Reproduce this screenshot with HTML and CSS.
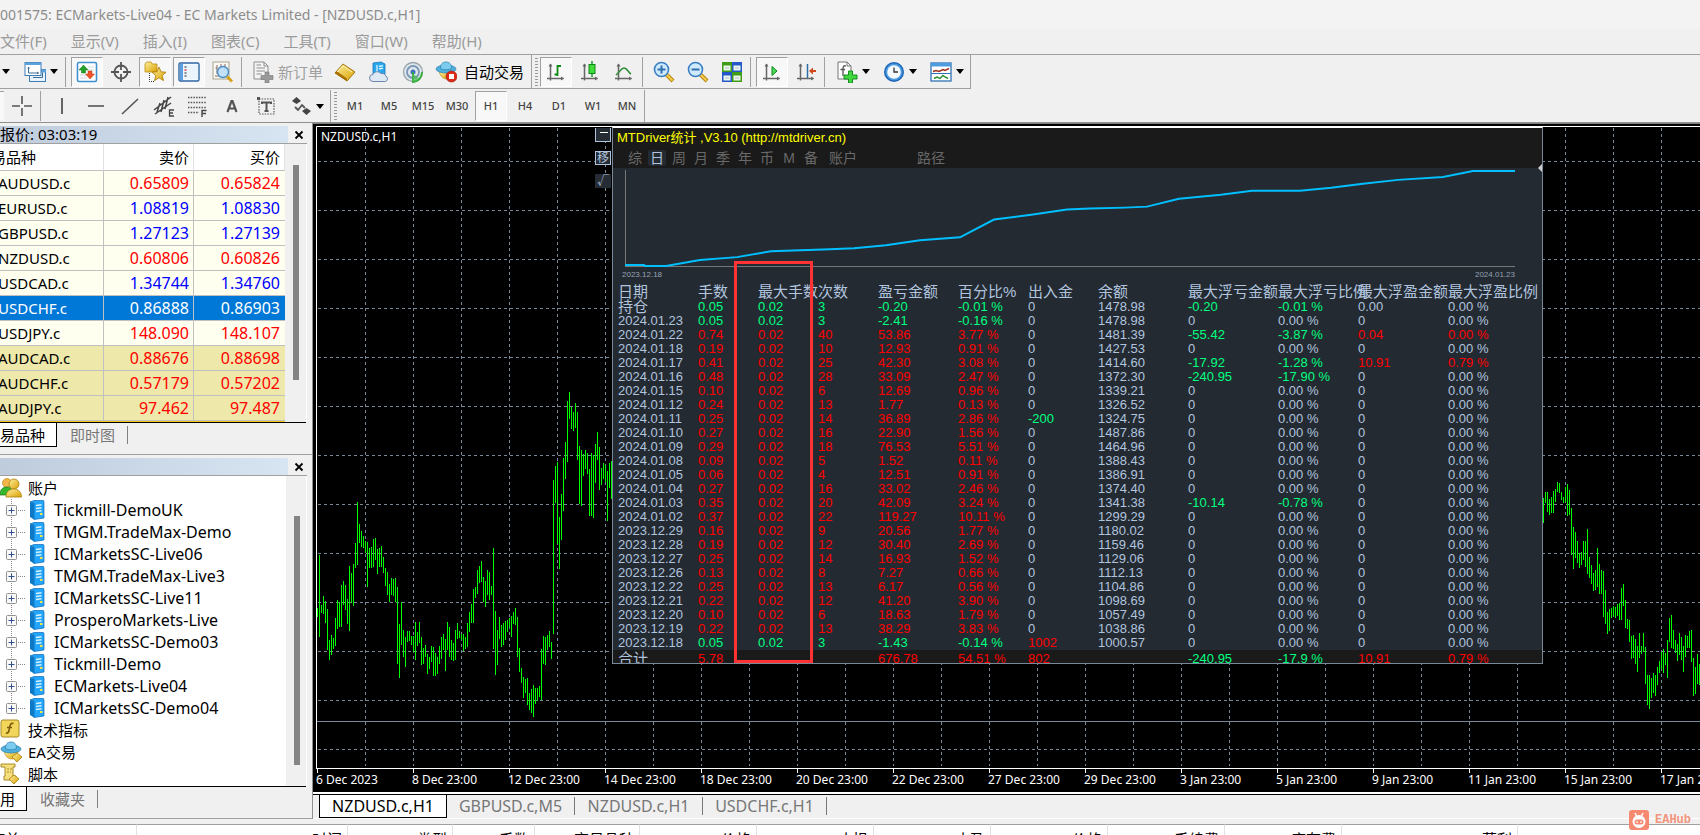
FILE: index.html
```html
<!DOCTYPE html>
<html lang="zh-CN">
<head>
<meta charset="utf-8">
<title>EC Markets Limited - [NZDUSD.c,H1]</title>
<link rel="stylesheet" href="styles.css">
</head>
<body>
<svg class="defs" aria-hidden="true">
  <defs>
    <linearGradient id="g-gold" x1="0" y1="0" x2="1" y2="1"><stop offset="0" stop-color="#fff0a0"/><stop offset="1" stop-color="#d9a100"/></linearGradient>
    <symbol id="caret" viewBox="0 0 8 5"><path d="M0 0h8L4 5z" fill="#000"/></symbol>
    <symbol id="cross" viewBox="0 0 10 10"><path d="M1.5 1.5l7 7M8.5 1.5l-7 7" stroke="#000" stroke-width="1.8"/></symbol>
    <symbol id="server" viewBox="0 0 16 20"><path d="M1 2l4-1.500h9.500l.5 1.500v16l-10 1.500L5 3z" fill="#22a5fb" stroke="#0a6cb8" stroke-width=".7"/><path d="M1 2l4 1v16.500L1 17z" fill="#0f78c4"/><path d="M7 5.500l5.500-.8M7 8.500l5.500-.8M7 11.500l5.500-.8" stroke="#d8f1ff" stroke-width="1.400"/><rect x="11" y="13" width="2.500" height="2" fill="#ffe14a"/></symbol>
    <symbol id="axes" viewBox="0 0 22 22"><path d="M5.500 3v16.500M2 17.500h16.500" stroke="#666" stroke-width="1.500" fill="none"/><path d="M3.500 5.500l2-3 2 3zM16 15.500l3 2-3 2z" fill="#666"/></symbol>
    <symbol id="hat" viewBox="0 0 22 20"><path d="M4 10c1 5 4 8 8 8s6-4 6-8z" fill="url(#g-gold)" stroke="#b8860b" stroke-width=".6"/><ellipse cx="11" cy="8" rx="10" ry="4" fill="#4fb0dc" stroke="#2d7fae" stroke-width=".7"/><path d="M5.500 7.500C5.500 3 7.500 1 11 1s5.500 2 5.500 6.500c-3 1.800-8 1.800-11 0z" fill="#7cccf0" stroke="#2d7fae" stroke-width=".7"/></symbol>
  </defs>
</svg>

<header class="title-bar">001575: ECMarkets-Live04 - EC Markets Limited - [NZDUSD.c,H1]</header>

<nav class="menu-bar">
  <button>文件(F)</button><button>显示(V)</button><button>插入(I)</button><button>图表(C)</button><button>工具(T)</button><button>窗口(W)</button><button>帮助(H)</button>
</nav>

<div class="toolbar toolbar-main">
  <div class="group">
    <button class="tool stub" aria-label="新图表"><svg class="caret"><use href="#caret"/></svg></button>
    <button class="tool split" aria-label="配置文件"><svg class="ico" viewBox="0 0 22 22"><rect x="5.500" y="8.500" width="16" height="12" fill="#eaf4ff" stroke="#3d7db5"/><path d="M5 8.500h17v3H5z" fill="#5da2dd"/><rect x="1" y="1.500" width="16" height="13" fill="#fff" stroke="#3d7db5"/><path d="M1 1.500h16v2.500H1z" fill="#5da2dd"/><path d="M4.500 6v6h10M4 7.500l.5-1.500.8 1.500M13 11l1.500 1-1.500 1M9 16.500h9.500v-5" stroke="#3d6d95" fill="none"/></svg><svg class="caret"><use href="#caret"/></svg></button>
    <span class="sep"></span>
    <button class="tool on" aria-label="市场报价"><svg class="ico" viewBox="0 0 22 22"><rect x="1.500" y="1.500" width="19" height="19" rx="1.500" fill="#fff" stroke="#3f92cf" stroke-width="1.600"/><path d="M4 14h7M4 17h7M12 6h6M12 9h6" stroke="#cfd8e0"/><path d="M7.500 4l4.500 5H9.500v3h-4V9H3z" fill="#23a12a" stroke="#0c7513" stroke-width=".5"/><path d="M14 18l-4.500-5H12v-3h4v3h2.500z" fill="#f0552a" stroke="#b53510" stroke-width=".5"/></svg></button>
    <button class="tool" aria-label="数据窗口"><svg class="ico" viewBox="0 0 22 22"><circle cx="11" cy="11" r="6.500" fill="none" stroke="#555" stroke-width="1.800"/><path d="M11 1v8M11 13v8M1 11h8M13 11h8" stroke="#555" stroke-width="1.800"/></svg></button>
    <button class="tool on" aria-label="导航"><svg class="ico" viewBox="0 0 22 22"><path d="M1 3l1.500-2H7l1.500 2H13v8H1z" fill="url(#g-gold)" stroke="#b98e10" stroke-width=".8"/><path d="M5.500 12v8.500h5" stroke="#333" stroke-dasharray="1 1" fill="none"/><path d="M15 6l2 4.800 5 .4-3.800 3.400 1.300 5-4.500-2.800-4.500 2.800 1.300-5L8 11.200l5-.4z" fill="url(#g-gold)" stroke="#a87900" stroke-width=".8"/></svg></button>
    <button class="tool on" aria-label="终端"><svg class="ico" viewBox="0 0 22 22"><rect x="1" y="2" width="20" height="18" rx="1.500" fill="#fff" stroke="#2c66a5" stroke-width="1.400"/><path d="M2 3h3v16H2z" fill="#5ea0de"/><path d="M5 3.500h15v15H5z" fill="#e9f4fd"/><path d="M6.500 6h2" stroke="#222"/><path d="M6.500 9h2" stroke="#e33" stroke-width="1.500"/><path d="M6.500 12h2M6.500 15h2" stroke="#222"/></svg></button>
    <button class="tool" aria-label="策略测试"><svg class="ico" viewBox="0 0 22 22"><rect x="1" y="1" width="16" height="17" fill="#f8f8f4" stroke="#aaa48e"/><path d="M5 4v9M3.500 7H5M9 3v5M13 3v6M3 15h5" stroke="#8a6a60"/><circle cx="11" cy="11" r="5.500" fill="#b9defa" fill-opacity=".9" stroke="#4a8cc4" stroke-width="1.400"/><path d="M15 15.500l5 5" stroke="#d6a21b" stroke-width="3"/></svg></button>
    <span class="sep"></span>
    <button class="tool order" disabled><svg class="ico" viewBox="0 0 22 22"><path d="M2 1h10l4 4v13H2z" fill="#f4f4f4" stroke="#8d8d8d"/><path d="M12 1v4h4M4.500 7H13M4.500 10H13M4.500 13h5M4.500 4H9" stroke="#8d8d8d" fill="none"/><path d="M13 11h4v3.500h4v4h-4V22h-4v-3.500H9v-4h4z" fill="#9a9a9a" stroke="#777" stroke-width=".6"/></svg><span>新订单</span></button>
    <button class="tool" aria-label="MetaEditor"><svg class="ico" viewBox="0 0 22 22"><path d="M1 12L9 3l12 8-8 9z" fill="url(#g-gold)" stroke="#9a6b00" stroke-width=".9"/><path d="M1 12l12 8v-2.500L2.500 10z" fill="#a96f00"/><path d="M3 11l6-6 9 6" stroke="#fff3b5" fill="none"/></svg></button>
    <button class="tool" aria-label="云服务"><svg class="ico" viewBox="0 0 22 22"><path d="M5 2l8-1 4 2v10H5z" fill="#2aa7ef" stroke="#1573b5" stroke-width=".8"/><path d="M9 4v8M11 5.500l4-.8M11 8l4-.8" stroke="#e0f4ff" stroke-width="1.300"/><path d="M5 20.500a3.500 3.500 0 0 1 0-7c1-3 6-4 8-.8 3-1 4.500.8 4.500 2.300a2.900 2.900 0 0 1 0 5.500z" fill="#dfe8f5" stroke="#6f86ab"/></svg></button>
    <button class="tool" aria-label="信号"><svg class="ico" viewBox="0 0 22 22"><circle cx="11" cy="11" r="9.500" fill="#dfe6ea" stroke="#9aa6ae" stroke-width="1.300"/><circle cx="11" cy="11" r="6" fill="none" stroke="#7b96b8" stroke-width="1.800"/><circle cx="11" cy="11" r="2.500" fill="#3f6fc0"/><path d="M11 11v10c6-.5 9-5 9-10" fill="none" stroke="#35ad3d" stroke-width="1.800"/><path d="M11 13v8c3 0 5-2 6-4z" fill="#4cba4f" opacity=".7"/></svg></button>
    <button class="tool auto"><svg class="ico" viewBox="0 0 22 22"><use href="#hat" width="22" height="20"/><circle cx="16.500" cy="15.500" r="5.500" fill="#dc2a17" stroke="#a31408" stroke-width=".6"/><rect x="14" y="13" width="5" height="5" fill="#fff"/></svg><span>自动交易</span></button>
  </div>
  <div class="group">
    <span class="grip"></span>
    <button class="tool on" aria-label="柱状图"><svg class="ico" viewBox="0 0 22 22"><use href="#axes"/><path d="M12.500 4v11M12.500 5h3.500M9.500 13.500h3" stroke="#0b8a14" stroke-width="1.800"/></svg></button>
    <button class="tool" aria-label="蜡烛图"><svg class="ico" viewBox="0 0 22 22"><use href="#axes"/><path d="M13 0v16" stroke="#0b8a14" stroke-width="1.300"/><rect x="10" y="3.500" width="6" height="9" fill="#3fdc3c" stroke="#0b8a14"/></svg></button>
    <button class="tool" aria-label="折线图"><svg class="ico" viewBox="0 0 22 22"><use href="#axes"/><path d="M3 14C7 11 8 7 11 7c3.500 0 4 4.500 7 6" stroke="#2f8f36" stroke-width="1.500" fill="none"/></svg></button>
    <span class="sep"></span>
    <button class="tool" aria-label="放大"><svg class="ico" viewBox="0 0 22 22"><path d="M13.500 13.500l6.500 6.500" stroke="#b78410" stroke-width="4"/><path d="M13.500 13.500l6 6" stroke="#f6cf4b" stroke-width="2"/><circle cx="8.500" cy="8.500" r="7" fill="#cfeafc" stroke="#3a7fc4" stroke-width="1.600"/><path d="M4.500 8.500h8M8.500 4.500v8" stroke="#2f6fb0" stroke-width="2"/></svg></button>
    <button class="tool" aria-label="缩小"><svg class="ico" viewBox="0 0 22 22"><path d="M13.500 13.500l6.500 6.500" stroke="#b78410" stroke-width="4"/><path d="M13.500 13.500l6 6" stroke="#f6cf4b" stroke-width="2"/><circle cx="8.500" cy="8.500" r="7" fill="#cfeafc" stroke="#3a7fc4" stroke-width="1.600"/><path d="M4.500 8.500h8" stroke="#2f6fb0" stroke-width="2"/></svg></button>
    <button class="tool" aria-label="平铺"><svg class="ico" viewBox="0 0 22 22"><path d="M1 1h10v10H1zM11 11h10v10H11z" fill="#3f9c17"/><path d="M11 1h10v10H11zM1 11h10v10H1z" fill="#2457c9"/><path d="M2.500 4.500h7v5h-7zM12.500 4.500h7v5h-7zM2.500 14.500h7v5h-7zM12.500 14.500h7v5h-7z" fill="#eef6ea"/><path d="M4 7h4M14 7h4M4 17h4M14 17h4" stroke="#a9c1da"/></svg></button>
    <span class="sep"></span>
    <button class="tool on" aria-label="自动滚动"><svg class="ico" viewBox="0 0 22 22"><use href="#axes"/><path d="M11 5.500v9l5-4.500z" fill="#4fd95a" stroke="#0b8a14"/></svg></button>
    <button class="tool" aria-label="图表平移"><svg class="ico" viewBox="0 0 22 22"><use href="#axes"/><path d="M12.500 3v14" stroke="#2c6ea8" stroke-width="1.500"/><path d="M14 10l4-3.500v2.500h3v2h-3v2.500z" fill="#d1481c"/></svg></button>
    <span class="sep"></span>
    <button class="tool split" aria-label="技术指标"><svg class="ico" viewBox="0 0 22 22"><path d="M2 1h9l4 4v13H2z" fill="#fdfdfd" stroke="#777"/><path d="M11 1v4h4" fill="none" stroke="#777"/><path d="M10 5c-2.500-1-3 1-3 3v7M4.500 8.500H9" stroke="#555" stroke-width="1.300" fill="none"/><path d="M12.500 10h4v4h4.500v4h-4.500v4h-4v-4H8v-4h4.500z" fill="#41d741" stroke="#0b8413" stroke-width=".9"/></svg><svg class="caret"><use href="#caret"/></svg></button>
    <button class="tool split" aria-label="周期"><svg class="ico" viewBox="0 0 22 22"><circle cx="11" cy="11" r="10" fill="#1d66b8"/><circle cx="11" cy="11" r="8.500" fill="#4b9be0"/><circle cx="11" cy="11" r="6.800" fill="#f5fafe"/><path d="M11 6.500V11h4" stroke="#333" stroke-width="1.300" fill="none"/></svg><svg class="caret"><use href="#caret"/></svg></button>
    <button class="tool split" aria-label="模板"><svg class="ico" viewBox="0 0 22 22"><rect x="1" y="2" width="20" height="18" fill="#fff" stroke="#2f74b5" stroke-width="1.300"/><path d="M1 2h20v3.500H1z" fill="#4f9be0"/><path d="M3 10.500l3-1 3 1 4-2 2 1 4-2" stroke="#a12c1a" stroke-width="1.500" fill="none"/><path d="M1 12.500h20" stroke="#2f74b5"/><path d="M4 17.500l3-1.500 3 1.500 3-3 2 1.500 3 1.500" stroke="#2a8f30" stroke-width="1.400" fill="none"/></svg><svg class="caret"><use href="#caret"/></svg></button>
  </div>
</div>

<div class="toolbar toolbar-draw">
  <div class="group">
    <span class="edge"></span>
    <button class="tool" aria-label="十字光标"><svg class="ico" viewBox="0 0 22 22"><path d="M11 1v8M11 13v8M1 11h8M13 11h8" stroke="#555" stroke-width="1.600"/></svg></button>
    <span class="sep"></span>
    <button class="tool" aria-label="垂直线"><svg class="ico" viewBox="0 0 22 22"><path d="M11 3v16" stroke="#555" stroke-width="1.800"/></svg></button>
    <button class="tool" aria-label="水平线"><svg class="ico" viewBox="0 0 22 22"><path d="M3 11h16" stroke="#555" stroke-width="1.600"/></svg></button>
    <button class="tool" aria-label="趋势线"><svg class="ico" viewBox="0 0 22 22"><path d="M3 19L19 4" stroke="#555" stroke-width="1.600"/></svg></button>
    <button class="tool" aria-label="等距通道"><svg class="ico" viewBox="0 0 22 22"><path d="M1 15L18 2M2 19L18 8M4 17l3-9M8 17l3-12M12 14l3-12" stroke="#444" stroke-width="1.500"/><path d="M21 15h-4.500v6H21M16.500 18H20" stroke="#444" stroke-width="1.300" fill="none"/></svg></button>
    <button class="tool" aria-label="斐波纳契"><svg class="ico" viewBox="0 0 22 22"><path d="M1 2.500h18M1 7.500h18M1 12.500h18M1 17.500h11" stroke="#555" stroke-width="1.400" stroke-dasharray="1.500 1.200"/><path d="M19.500 15.500H15V22M15 18.500h4" stroke="#444" stroke-width="1.400" fill="none"/></svg></button>
    <button class="tool" aria-label="文字"><svg class="ico" viewBox="0 0 22 22"><path d="M6.500 17L10.500 6h1L15.500 17M8 13.500h6" stroke="#555" stroke-width="2.200" fill="none"/></svg></button>
    <button class="tool" aria-label="文本标签"><svg class="ico" viewBox="0 0 22 22"><rect x="4" y="4" width="15" height="15" fill="none" stroke="#555" stroke-width="1.200" stroke-dasharray="1.500 1.200"/><path d="M2 2h3v3H2z" fill="#555"/><path d="M7 9V7.500h9V9M11.500 7.500V16M9.500 16h4" stroke="#555" stroke-width="2" fill="none"/></svg></button>
    <button class="tool split" aria-label="箭头"><svg class="ico" viewBox="0 0 22 22"><path d="M2 6l4.500-4L11 6 6.500 9zM12 16l4.500-3 4.500 3-4.500 4z" fill="#444"/><path d="M5 12l3 3 4-5 3 3" stroke="#555" stroke-width="1.800" fill="none"/></svg><svg class="caret"><use href="#caret"/></svg></button>
  </div>
  <div class="group periods">
    <span class="grip"></span>
    <button class="tool">M1</button><button class="tool">M5</button><button class="tool">M15</button><button class="tool">M30</button><button class="tool on">H1</button><button class="tool">H4</button><button class="tool">D1</button><button class="tool">W1</button><button class="tool">MN</button>
  </div>
</div>

<main class="workspace">
  <aside class="side">
    <section class="dock">
      <div class="dock-title"><h2>报价: 03:03:19</h2><button aria-label="关闭"><svg viewBox="0 0 10 10"><use href="#cross"/></svg></button></div>
      <div class="dock-body">
        <table class="quotes">
          <colgroup><col class="q-name"><col class="q-bid"><col class="q-ask"></colgroup>
          <thead><tr><th>易品种</th><th>卖价</th><th>买价</th></tr></thead>
          <tbody>
            <tr class="down"><td>AUDUSD.c</td><td>0.65809</td><td>0.65824</td></tr>
            <tr class="up"><td>EURUSD.c</td><td>1.08819</td><td>1.08830</td></tr>
            <tr class="up"><td>GBPUSD.c</td><td>1.27123</td><td>1.27139</td></tr>
            <tr class="down"><td>NZDUSD.c</td><td>0.60806</td><td>0.60826</td></tr>
            <tr class="up"><td>USDCAD.c</td><td>1.34744</td><td>1.34760</td></tr>
            <tr class="picked"><td>USDCHF.c</td><td>0.86888</td><td>0.86903</td></tr>
            <tr class="down"><td>USDJPY.c</td><td>148.090</td><td>148.107</td></tr>
            <tr class="down minor"><td>AUDCAD.c</td><td>0.88676</td><td>0.88698</td></tr>
            <tr class="down minor"><td>AUDCHF.c</td><td>0.57179</td><td>0.57202</td></tr>
            <tr class="down minor"><td>AUDJPY.c</td><td>97.462</td><td>97.487</td></tr>
          </tbody>
        </table>
        <div class="scroll scroll-quotes"><span></span></div>
      </div>
      <div class="dock-tabs"><button class="active">易品种</button><button>即时图</button></div>
    </section>
    <section class="dock dock-nav">
      <div class="dock-title"><h2></h2><button aria-label="关闭"><svg viewBox="0 0 10 10"><use href="#cross"/></svg></button></div>
      <div class="dock-body">
        <ul class="tree">
          <li class="root"><svg viewBox="0 0 22 22"><circle cx="7" cy="6" r="4.500" fill="#f3b64a" stroke="#b8860b" stroke-width=".7"/><path d="M0 18c0-6 3-8 7-8s6 3 6 8z" fill="#35b62d" stroke="#1d7d18" stroke-width=".7"/><circle cx="14" cy="7" r="5" fill="url(#g-gold)" stroke="#a97f0a" stroke-width=".8"/><path d="M6 20c0-6 4-8 8-8s7.500 3 7.500 8z" fill="url(#g-gold)" stroke="#a97f0a" stroke-width=".8"/></svg>账户</li>
          <li class="acct">Tickmill-DemoUK</li>
          <li class="acct">TMGM.TradeMax-Demo</li>
          <li class="acct">ICMarketsSC-Live06</li>
          <li class="acct">TMGM.TradeMax-Live3</li>
          <li class="acct">ICMarketsSC-Live11</li>
          <li class="acct">ProsperoMarkets-Live</li>
          <li class="acct">ICMarketsSC-Demo03</li>
          <li class="acct">Tickmill-Demo</li>
          <li class="acct">ECMarkets-Live04</li>
          <li class="acct">ICMarketsSC-Demo04</li>
          <li class="root"><svg viewBox="0 0 22 22"><rect x="1" y="1" width="18" height="17" rx="2" fill="#f2d65c" stroke="#a98a26"/><path d="M13.500 4.500c-3-.8-3.500 1.500-4 4.500-.5 3.500-1 5.500-3.500 5M7 8.500h5" stroke="#7a5a08" stroke-width="1.600" fill="none"/></svg>技术指标</li>
          <li class="root"><svg viewBox="0 0 22 22"><use href="#hat" width="22" height="20"/><path d="M12 16l5-4 5 4-5 5z" fill="url(#g-gold)" stroke="#a97f0a" stroke-width=".8"/></svg>EA交易</li>
          <li class="root"><svg viewBox="0 0 22 22"><path d="M1 1h14v3h-2v9h3v4H4v-4h1V4H1z" fill="#f5de7e" stroke="#a98a26"/><path d="M7 6h5M7 9h4" stroke="#a98a26" stroke-dasharray="2 1"/><path d="M9 16l5-4 5 4-5 5z" fill="url(#g-gold)" stroke="#a97f0a" stroke-width=".8"/></svg>脚本</li>
        </ul>
        <div class="scroll scroll-nav"><span></span></div>
      </div>
      <div class="dock-tabs"><button class="active">用</button><button>收藏夹</button></div>
    </section>
  </aside>

  <section class="charts">
    <div class="chart">
      <svg class="plot" id="plot"></svg>
      <div class="symbol">NZDUSD.c,H1</div>
      <div class="times" id="times"></div>

      <div class="mini">
        <button class="mini-line" aria-label="最小化"></button>
        <button class="mini-move">移</button>
        <button>√</button>
      </div>

      <section class="stats">
        <header>
          <h1>MTDriver统计 ,V3.10 (http://mtdriver.cn)</h1>
          <nav><button>综</button><button class="active">日</button><button>周</button><button>月</button><button>季</button><button>年</button><button>币</button><button>M</button><button>备</button><button class="wide">账户</button><button class="wide path">路径</button></nav>
        </header>
        <figure>
          <svg class="curve" viewBox="0 0 929 104" preserveAspectRatio="none">
            <path d="M12.500 2v98M12 99.500h890" stroke="#7a7a7a" fill="none"/>
            <path d="M12 98H31L32 99H53L87 93L124 90L158 84L217 82L241 81L273 78L307 73L347 70L381 52L420 47L454 42L477 41L512 40L534 39L566 31L608 27L639 23H687L718 20L750 16L785 12L830 9L860 3H902" stroke="#00bfff" stroke-width="2" fill="none"/>
            <path d="M929-4l-4 4 4 4z" fill="#ccc"/>
          </svg>
          <figcaption><span>2023.12.18</span><span>2024.01.23</span></figcaption>
        </figure>
        <table class="days">
          <colgroup><col class="w80"><col class="w60"><col class="w60"><col class="w60"><col class="w80"><col class="w70"><col class="w70"><col class="w90"><col class="w90"><col class="w80"><col class="w90"><col></colgroup>
          <thead><tr><th>日期</th><th>手数</th><th>最大手数</th><th>次数</th><th>盈亏金额</th><th>百分比%</th><th>出入金</th><th>余额</th><th>最大浮亏金额</th><th>最大浮亏比例</th><th>最大浮盈金额</th><th>最大浮盈比例</th></tr></thead>
          <tbody id="days"></tbody>
        </table>
        <span class="marker"></span>
      </section>
    </div>
    <nav class="chart-tabs"><button class="active">NZDUSD.c,H1</button><button>GBPUSD.c,M5</button><button>NZDUSD.c,H1</button><button>USDCHF.c,H1</button></nav>
  </section>
</main>

<footer class="terminal">
  <span class="t-order">订单</span><span class="t-time">时间</span><span class="t-type">类型</span><span class="t-lots">手数</span><span class="t-sym">交易品种</span><span class="t-num">价格</span><span class="t-num">止损</span><span class="t-num">止盈</span><span class="t-num">价格</span><span class="t-num">手续费</span><span class="t-num">库存费</span><span class="t-profit">获利</span>
</footer>

<div class="brand"><svg viewBox="0 0 20 20"><rect width="20" height="20" rx="3" fill="#f58a70"/><circle cx="10" cy="11.500" r="6.500" fill="#fff"/><path d="M6 3l1.500 3M14 3l-1.500 3" stroke="#fff" stroke-width="1.500"/><rect x="5.500" y="9.500" width="9" height="5" rx="2.500" fill="#f58a70"/><path d="M8 11v2M12 11v2" stroke="#fff" stroke-width="1.200"/></svg>EAHub</div>
<script src="app.js"></script>
</body>
</html>
```

FILE: styles.css
```css
* { box-sizing: border-box; }
html, body { height: 100%; }
body {
  margin: 0; display: flex; flex-direction: column; overflow: hidden;
  background: #f0f0f0; color: #000;
  font: 15px/20px "Noto Sans", "Noto Sans CJK SC", sans-serif;
}
button { font: inherit; color: inherit; background: none; border: 0; padding: 0; margin: 0; }
h1, h2, ul, figure { margin: 0; padding: 0; font-weight: normal; }
.defs { position: absolute; width: 0; height: 0; }

.title-bar { flex: none; height: 29px; line-height: 29px; font-size: 14px; background: #f3f3f3; color: #8c8c8c; white-space: nowrap; }
.menu-bar { flex: none; display: flex; gap: 24px; height: 25px; line-height: 25px; color: #9a9a9a; }

.toolbar { flex: none; display: flex; }
.toolbar-main { height: 36px; border-top: 1px solid #a0a0a0; }
.toolbar-draw { height: 33px; border-bottom: 1px solid #909090; }
.toolbar .group { display: flex; align-items: center; gap: 2px; padding-right: 1px; border-right: 1px solid #a0a0a0; }
.toolbar-main .group { height: 34px; border-bottom: 1px solid #a0a0a0; }
.tool { display: flex; align-items: center; justify-content: center; width: 32px; height: 30px; }
.tool.on { border: 1px solid; border-color: #a0a0a0 #fff #fff #a0a0a0; background: #f8f8f8; }
.tool .ico { width: 22px; height: 22px; flex: none; }
.tool .caret { width: 8px; height: 5px; flex: none; }
.tool.split { width: 45px; justify-content: flex-start; gap: 4px; padding-left: 6px; }
.tool.stub { width: 16px; padding-right: 4px; }
.tool.order { width: 80px; justify-content: flex-start; gap: 4px; padding-left: 5px; color: #a0a0a0; }
.tool.auto { width: 99px; justify-content: flex-start; gap: 7px; padding-left: 4px; }
.tool.order span, .tool.auto span { white-space: nowrap; }
.sep { width: 4px; height: 30px; border-left: 1px solid #a0a0a0; }
.grip { width: 3px; height: 28px; margin-left: 3px; background: repeating-linear-gradient(#999 0 1px, #f0f0f0 1px 3px); }
.edge { width: 4px; height: 30px; background: #f8f8f8; border-top: 1px solid #a0a0a0; }
.periods { font-size: 11px; font-weight: 500; color: #444; }

.workspace { flex: 1; min-height: 0; display: flex; }
.side { flex: none; width: 313px; display: flex; flex-direction: column; border-right: 1px solid #909090; }
.dock { display: flex; flex-direction: column; padding-top: 3px; border-bottom: 1px solid #a0a0a0; }
.dock-nav { flex: 1; min-height: 0; }
.dock-title { display: flex; align-items: center; height: 18px; width: 307px; border-bottom: 1px solid #a0a0a0; }
.dock-title h2 { flex: none; width: 288px; height: 17px; line-height: 17px; font-size: 15px; background: linear-gradient(90deg, #bfccdc, #d7e4f2); }
.dock-title button { flex: none; width: 22px; height: 16px; display: flex; align-items: center; justify-content: center; }
.dock-title svg { width: 10px; height: 10px; }
.dock-body { display: flex; width: 307px; border-right: 1px solid #fff; }
.dock-nav .dock-body { flex: 1; min-height: 0; background: #fff; }

.quotes { width: 285px; table-layout: fixed; border-collapse: separate; border-spacing: 0; background: #fff; border-bottom: 1px solid #f5c518; }
.q-name { width: 104px; }
.q-bid { width: 90px; }
.quotes th, .quotes td { padding: 0 4px 0 0; font-weight: normal; text-align: right; white-space: nowrap; border-right: 1px solid #c0c0c0; border-bottom: 1px solid #c0c0c0; }
.quotes th { height: 27px; border-right-color: #e2e2e2; }
.quotes td { height: 25px; line-height: 24px; font-size: 16px; }
.quotes th:first-child, .quotes td:first-child { text-align: left; color: #000; font-size: 15px; }
.quotes th:first-child { text-indent: -9px; }
.quotes td:first-child { text-indent: -2px; }
.quotes td:last-child { border-right: 0; padding-right: 5px; }
.quotes tbody tr { background: #fffff0; }
.quotes tbody .minor { background: #eee8aa; }
.quotes .down { color: #f00; }
.quotes .up { color: #00f; }
.quotes .picked, .quotes .picked td:first-child { color: #fff; background: #0078d7; }

.scroll { flex: 1; background: #f0f0f0; }
.scroll span { display: block; width: 6px; margin-left: 8px; background: #858585; }
.scroll-quotes span { margin-top: 21px; height: 215px; }
.scroll-nav span { margin-top: 40px; height: 249px; }

.dock-tabs { display: flex; align-items: flex-start; height: 32px; width: 306px; border-top: 1px solid #000; }
.dock-nav .dock-tabs { flex: none; }
.dock-tabs button { height: 24px; padding: 0 12px 0 13px; color: #777; display: flex; align-items: center; }
.dock-tabs button + button { height: 18px; margin-top: 3px; border-right: 1px solid #808080; }
.dock-tabs .active { padding: 0 11px 0 0; background: #fff; color: #000; border: 1px solid #000; border-width: 0 1px 1px 0; }

.tree { width: 286px; padding-top: 1px; list-style: none; background: #fff; }
.tree li { display: flex; align-items: center; height: 22px; white-space: nowrap; }
.tree .root { gap: 6px; }
.tree .root svg { width: 22px; height: 22px; flex: none; }
.tree .acct { font-size: 16px; }
.tree .twig { width: 29px; height: 22px; flex: none; }
.tree .srv { width: 16px; height: 20px; margin-right: 9px; flex: none; }

.charts { flex: 1; min-width: 0; display: flex; flex-direction: column; }
.chart { flex: 1; min-height: 0; position: relative; overflow: hidden; background: #000; color: #fff; border-top: 1px solid #808080; }
.plot { position: absolute; inset: 0; width: 100%; height: 100%; }
.symbol { position: absolute; left: 8px; top: 3px; font-size: 12px; }
.times { position: absolute; left: 3px; bottom: 2px; display: flex; font-size: 12px; line-height: 20px; }
.times span { width: 96px; flex: none; white-space: nowrap; }

.mini { position: absolute; left: 282px; top: 4px; display: flex; flex-direction: column; gap: 9px; }
.mini button { width: 16px; height: 14px; font-size: 12px; line-height: 12px; background: #262c34; color: #b0c4de; }
.mini .mini-line { border: 1px solid #b0c4de; border-top: 0; background: linear-gradient(#fff, #fff) 4px 4px / 8px 1px no-repeat #262c34; }
.mini .mini-move { border: 1px solid #b0c4de; }

.stats { position: absolute; left: 299px; top: 3px; width: 931px; height: 537px; overflow: hidden; background: #242a32; border: 1px solid #778899; border-top-color: #fff; color: #b0c4de; font: 13px/14px "Liberation Sans", "Noto Sans CJK SC", sans-serif; }
.stats header { height: 40px; padding: 0 0 0 4px; background: #1a1a1a; }
.stats h1 { font-size: 13px; line-height: 19px; color: #ff0; }
.stats nav { display: flex; gap: 4px; padding: 3px 0 0 9px; font-size: 14px; color: #696969; }
.stats nav button { width: 18px; height: 16px; line-height: 16px; }
.stats nav .active { background: #242a32; color: #b0c4de; border-radius: 2px; }
.stats nav .wide { width: 30px; margin-left: 4px; }
.stats nav .path { margin-left: 54px; }
.stats figure { height: 117px; }
.curve { display: block; width: 929px; height: 103px; overflow: visible; }
.stats figcaption { display: flex; justify-content: space-between; width: 902px; padding-left: 9px; font-size: 8px; line-height: 8px; color: #94a2b2; }
.days { width: 929px; table-layout: fixed; border-collapse: collapse; }
.days th, .days td { height: 14px; padding: 0 0 0 5px; text-align: left; font-weight: normal; white-space: nowrap; }
.days th { height: 15px; font-size: 15px; vertical-align: top; }
.days .cjk { font-size: 15px; }
.days .g { color: #00ff7f; }
.days .r { color: #f00; }
.days .sum { background: #1a1a1a; }
.days .sum td { height: 17px; }
.w60 { width: 60px; } .w70 { width: 70px; } .w80 { width: 80px; } .w90 { width: 90px; }
.marker { position: absolute; left: 121px; top: 133px; width: 79px; height: 402px; border: 3px solid #ff3333; }

.chart-tabs { flex: none; display: flex; align-items: flex-start; height: 27px; padding-left: 6px; border-top: 2px solid #fff; border-bottom: 1px solid #fff; box-shadow: inset 0 1px #000; color: #777; font-size: 16px; }
.chart-tabs button { height: 18px; margin-top: 3px; width: 128px; border-right: 1px solid #777; display: flex; align-items: center; justify-content: center; }
.chart-tabs button:last-child { width: 124px; }
.chart-tabs .active { height: 24px; margin-top: 0; background: #fff; color: #000; border: 1px solid #000; }

.terminal { flex: none; display: flex; height: 16px; padding-top: 5px; overflow: hidden; white-space: nowrap; }
.terminal span { flex: none; height: 30px; padding: 4px 5px 0 0; text-align: right; background: #fff; border-top: 1px solid #a0a0a0; border-right: 1px solid #e2e2e2; }
.terminal .t-order { width: 137px; text-align: left; text-indent: -10px; }
.terminal .t-time { width: 211px; }
.terminal .t-type { width: 105px; }
.terminal .t-lots { width: 82px; }
.terminal .t-sym { width: 105px; }
.terminal .t-num { width: 117px; }
.terminal .t-profit { width: 176px; }
.terminal::after { content: ""; flex: 1; height: 30px; background: #fff; border-top: 1px solid #a0a0a0; }

.brand { position: absolute; right: 9px; bottom: 5px; display: flex; align-items: center; gap: 6px; color: #f3947d; font: bold 12px/20px "Liberation Mono", monospace; }
.brand svg { width: 20px; height: 20px; }
```

FILE: app.js
```js
const NS = "http://www.w3.org/2000/svg";

function path(parent, d, attrs) {
  const p = document.createElementNS(NS, "path");
  p.setAttribute("d", d);
  for (const k in attrs) p.setAttribute(k, attrs[k]);
  parent.appendChild(p);
}

// High/low pairs, three units per pixel.
const early = [415,440,255,500,405,430,378,432,393,458,417,540,510,570,495,555,505,537,443,528,390,476,396,470,345,472,333,404,345,420,387,462,288,483,309,398,282,408,218,294,96,285,162,219,183,231,198,235,213,250,216,350,234,294,231,294,207,290,204,270,237,312,234,290,228,290,262,308,294,348,306,374,342,396,324,374,326,378,324,396,351,582,462,624,396,525,480,560,501,590,483,516,483,514,497,526,498,546,457,570,486,528,457,519,501,585,534,582,525,560,552,612,560,597,528,576,531,618,549,618,561,612,528,582,501,567,492,540,507,603,456,540,470,561,510,570,519,573,480,570,459,506,483,504,492,510,492,543,501,537,459,530,426,486,402,460,357,460,351,384,300,372,288,339,273,336,321,396,333,411,300,376,306,390,348,374,234,537,423,615,480,585,441,507,465,530,459,525,453,510,450,486,444,471,438,501,426,463,414,465,441,560,534,606,594,639,621,684,627,669,624,705,669,720,657,729,645,741,654,702,654,693,648,681,537,690,498,582,501,585,495,540,483,531,516,567,30,492,-12,99,-24,222,141,297,72,210,-36,123,-84,27,-207,-24,-234,-153,-190,-123,-174,-117,-201,-126,-174,-30,-72,102,-60,108,-48,18,-60,-4,-51,12,-3,138,-51,138,-45,144,-78,40,-114,-30,-69,60,-6,45,-21,27,-15,36,3,153,-21,54,-27,87];
const late = [263,340,246,278,246,305,267,315,262,310,243,308,237,275,216,246,219,250,246,270,262,280,231,275,222,318,240,315,294,435,351,477,366,445,393,460,430,473,426,465,393,450,393,472,357,492,441,504,465,522,489,543,480,540,414,530,462,552,480,552,483,620,540,642,606,672,597,663,594,625,588,618,591,624,582,618,579,630,534,630,522,588,570,654,627,657,630,696,678,747,675,744,687,762,708,786,669,744,708,732,669,726,711,822,795,885,795,897,804,864,789,850,795,858,771,825,753,788,726,777,717,789,729,765,690,804,624,696,615,714,660,717,690,729,702,753,669,735,681,750,708,786,675,741,678,714,663,714,660,756,744,858,771,852,732,822,762,825];

function bars(data, x0, y0) {
  let d = "";
  for (let i = 0; i < data.length; i += 2) {
    d += `M${x0 + i}.5 ${y0 + Math.round(data[i] / 3)}V${y0 + Math.round(data[i + 1] / 3)}`;
  }
  return d;
}

const plot = document.getElementById("plot");
let grid = "", ticks = "";
for (let x = 52; x < 3000; x += 48) grid += `M${x}.5 4V642`;
for (let y = 37; y < 640; y += 49) grid += `M5 ${y}.5H3000`;
for (let x = 4; x < 3000; x += 96) ticks += `M${x}.5 645v4`;
path(plot, grid, { stroke: "#778899", "stroke-dasharray": "3 3", fill: "none" });
path(plot, "M4 597.5H3000", { stroke: "#778899" });
path(plot, bars(early, 4, 346), { stroke: "#00ff00" });
path(plot, bars(late, 1230, 286), { stroke: "#00ff00" });
path(plot, "M3.5 645V2.5H3000M3 644.5H3000" + ticks, { stroke: "#fff", fill: "none" });

const times = ["6 Dec 2023", "8 Dec 23:00", "12 Dec 23:00", "14 Dec 23:00", "18 Dec 23:00", "20 Dec 23:00", "22 Dec 23:00", "27 Dec 23:00", "29 Dec 23:00", "3 Jan 23:00", "5 Jan 23:00", "9 Jan 23:00", "11 Jan 23:00", "15 Jan 23:00", "17 Jan 23:00"];
document.getElementById("times").innerHTML = times.map(t => `<span>${t}</span>`).join("");

const rows = `持仓|0.05|0.02|3|-0.20|-0.01 %|0|1478.98|-0.20|-0.01 %|0.00|0.00 %
2024.01.23|0.05|0.02|3|-2.41|-0.16 %|0|1478.98
2024.01.22|0.74|0.02|40|53.86|3.77 %|0|1481.39|-55.42|-3.87 %|+0.04|+0.00 %
2024.01.18|0.19|0.02|10|12.93|0.91 %|0|1427.53
2024.01.17|0.41|0.02|25|42.30|3.08 %|0|1414.60|-17.92|-1.28 %|+10.91|+0.79 %
2024.01.16|0.48|0.02|28|33.09|2.47 %|0|1372.30|-240.95|-17.90 %|0|0.00 %
2024.01.15|0.10|0.02|6|12.69|0.96 %|0|1339.21
2024.01.12|0.24|0.02|13|1.77|0.13 %|0|1326.52
2024.01.11|0.25|0.02|14|36.89|2.86 %|-200|1324.75
2024.01.10|0.27|0.02|16|22.90|1.56 %|0|1487.86
2024.01.09|0.29|0.02|18|76.53|5.51 %|0|1464.96
2024.01.08|0.09|0.02|5|1.52|0.11 %|0|1388.43
2024.01.05|0.06|0.02|4|12.51|0.91 %|0|1386.91
2024.01.04|0.27|0.02|16|33.02|2.46 %|0|1374.40
2024.01.03|0.35|0.02|20|42.09|3.24 %|0|1341.38|-10.14|-0.78 %|0|0.00 %
2024.01.02|0.37|0.02|22|119.27|10.11 %|0|1299.29
2023.12.29|0.16|0.02|9|20.56|1.77 %|0|1180.02
2023.12.28|0.19|0.02|12|30.40|2.69 %|0|1159.46
2023.12.27|0.25|0.02|14|16.93|1.52 %|0|1129.06
2023.12.26|0.13|0.02|8|7.27|0.66 %|0|1112.13
2023.12.22|0.25|0.02|13|6.17|0.56 %|0|1104.86
2023.12.21|0.22|0.02|12|41.20|3.90 %|0|1098.69
2023.12.20|0.10|0.02|6|18.63|1.79 %|0|1057.49
2023.12.19|0.22|0.02|13|38.29|3.83 %|0|1038.86
2023.12.18|0.05|0.02|3|-1.43|-0.14 %|+1002|1000.57
合计|5.78|||676.78|54.51 %|+802||-240.95|-17.9 %|+10.91|+0.79 %`.split("\n");

document.getElementById("days").innerHTML = rows.map((line, n) => {
  const cells = line.split("|");
  if (cells.length === 8) cells.push("0", "0.00 %", "0", "0.00 %");
  const loss = cells[4].startsWith("-");
  const html = cells.map((text, i) => {
    let cls = "";
    if (i === 0) cls = /^\d/.test(text) ? "" : "cjk";
    else if (i <= 5) cls = loss ? "g" : "r";
    else if (text.startsWith("-")) cls = "g";
    else if (text.startsWith("+")) cls = "r";
    return `<td class="${cls}">${text.replace("+", "")}</td>`;
  }).join("");
  return `<tr class="${n === rows.length - 1 ? "sum" : ""}">${html}</tr>`;
}).join("");

document.querySelectorAll(".acct").forEach((li, i, all) => {
  const end = i === all.length - 1 ? 11 : 22;
  li.insertAdjacentHTML("afterbegin",
    `<svg class="twig" viewBox="0 0 29 22"><path d="M11.500 0V${end}M16 11.500h10" stroke="#888" stroke-dasharray="1 1" fill="none"/><rect x="6.500" y="6.500" width="10" height="10" rx="1" fill="#fafafa" stroke="#919191"/><path d="M8.500 11.500h6M11.500 8.500v6" stroke="#34508f"/></svg><svg class="srv"><use href="#server"/></svg>`);
});
```
